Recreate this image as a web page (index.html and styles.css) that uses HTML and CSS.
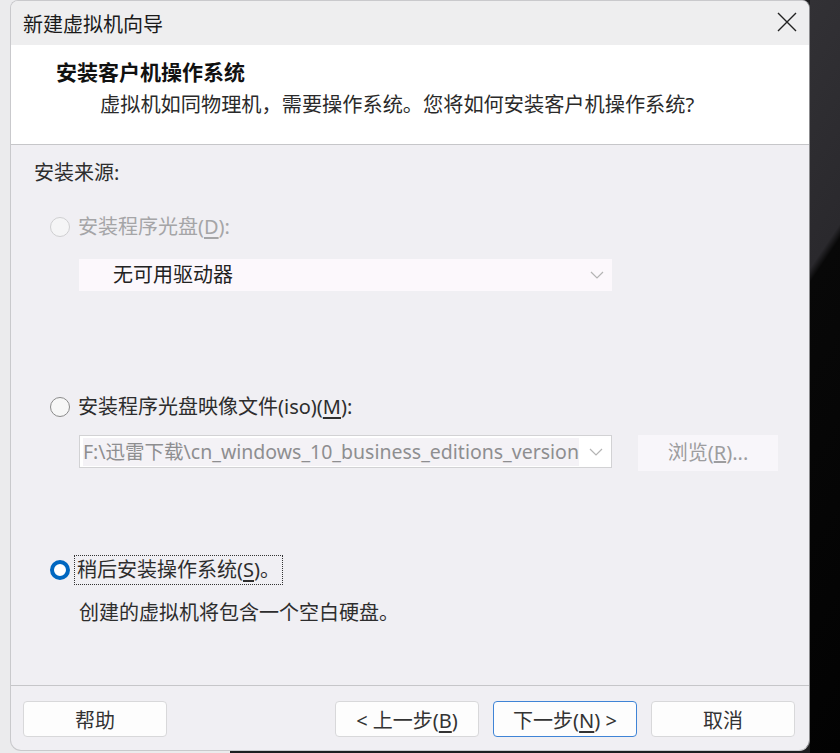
FILE: index.html
```html
<!DOCTYPE html>
<html lang="zh-CN">
<head>
    <meta charset="UTF-8">
    <meta name="viewport" content="width=device-width, initial-scale=1.0">
    <title>新建虚拟机向导</title>
    <link rel="stylesheet" href="styles.css">
</head>
<body>
    <div class="desk">
        <div class="window">
            <div class="titlebar">
                <span class="title">新建虚拟机向导</span>
                <svg class="close" width="22" height="22" viewBox="0 0 22 22">
                    <path d="M2 2 L20 20 M20 2 L2 20" stroke="#222" stroke-width="1.4" fill="none"/>
                </svg>
            </div>

            <div class="header">
                <h1>安装客户机操作系统</h1>
                <p>虚拟机如同物理机，需要操作系统。您将如何安装客户机操作系统?</p>
            </div>

            <div class="content">
                <div class="group-label">安装来源:</div>

                <div class="option disabled option-disc">
                    <span class="radio"></span>
                    <span class="label">安装程序光盘(<u>D</u>):</span>
                </div>
                <div class="select select-disc">
                    <span class="select-text">无可用驱动器</span>
                    <svg class="chevron" width="14" height="8" viewBox="0 0 14 8">
                        <path d="M1 1 L7 7 L13 1" stroke="#b4b4b4" stroke-width="1.2" fill="none"/>
                    </svg>
                </div>

                <div class="option option-iso">
                    <span class="radio"></span>
                    <span class="label">安装程序光盘映像文件(iso)(<u>M</u>):</span>
                </div>
                <div class="iso-row">
                    <div class="select select-iso">
                        <span class="select-text">F:\迅雷下载\cn_windows_10_business_editions_version</span>
                        <svg class="chevron" width="14" height="8" viewBox="0 0 14 8">
                            <path d="M1 1 L7 7 L13 1" stroke="#b4b4b4" stroke-width="1.2" fill="none"/>
                        </svg>
                    </div>
                    <div class="browse">浏览(<u>R</u>)...</div>
                </div>

                <div class="option checked option-later">
                    <span class="radio"></span>
                    <span class="label focus">稍后安装操作系统(<u>S</u>)。</span>
                </div>
                <div class="note">创建的虚拟机将包含一个空白硬盘。</div>
            </div>

            <div class="footer">
                <button class="btn">帮助</button>
                <button class="btn btn-back">&lt; 上一步(<u>B</u>)</button>
                <button class="btn btn-next">下一步(<u>N</u>) &gt;</button>
                <button class="btn">取消</button>
            </div>
        </div>
        <div class="desk-right"></div>
    </div>
</body>
</html>
```

FILE: styles.css
```css
body {
    margin: 0;
    height: 753px;
    overflow: hidden;
    font-family: "Noto Sans", "Noto Sans CJK SC", sans-serif;
    background: linear-gradient(to right, #ebebed 0, #ebebed 230px, #1d1d1f 230px);
}

.desk {
    display: flex;
    height: 753px;
}

.window {
    margin-left: 10px;
    width: 798px;
    height: 749px;
    display: flex;
    flex-direction: column;
    background-color: #f0eff3;
    border: 1px solid #c9c9cc;
    border-right-color: #8c8c8f;
    border-radius: 8px 8px 11px 11px;
    overflow: hidden;
}

.desk-right {
    flex: 1;
    background: linear-gradient(124deg, #323135 0, #2a292d 150px, #080808 158px, #020202 100%);
}

.titlebar {
    height: 44px;
    flex-shrink: 0;
    display: flex;
    align-items: center;
    justify-content: space-between;
    padding: 0 11px 0 12px;
    background-color: #eeeeef;
}

.title {
    font-size: 20px;
    color: #1a1a1a;
}

.close {
    margin-top: -2px;
}

.header {
    height: 100px;
    flex-shrink: 0;
    box-sizing: border-box;
    padding-top: 13px;
    background-color: #fff;
    border-bottom: 1px solid #c6c6c9;
}

.header h1 {
    margin: 0 0 0 45px;
    font-size: 21px;
    line-height: 28px;
    font-weight: bold;
    color: #111;
}

.header p {
    margin: 4px 0 0 89px;
    font-size: 20.2px;
    line-height: 28px;
    color: #2a2a2a;
}

.content {
    flex: 1;
    padding: 14px 0 0 23px;
    font-size: 20px;
    line-height: 28px;
    color: #2d2d2d;
}

.option {
    display: flex;
    align-items: center;
    margin-left: 16px;
}

.option-disc {
    margin-top: 26px;
}

.option-iso {
    margin-top: 102px;
}

.option-later {
    margin-top: 85px;
}

.radio {
    width: 18px;
    height: 18px;
    border-radius: 50%;
    border: 1px solid #8b8b8b;
    background-color: #f7f7f7;
    margin-right: 8px;
    flex-shrink: 0;
}

.disabled .radio {
    border-color: #cfcfd1;
    background-color: #f5f5f6;
}

.disabled .label {
    color: #a5a5a7;
}

.checked .radio {
    width: 12px;
    height: 12px;
    border: 4px solid #0067c0;
    background-color: #fff;
    margin-right: 7px;
}

.label u {
    text-underline-offset: 3px;
}

.focus {
    outline: 1px dotted #333;
    padding: 0 2px;
    margin-left: -2px;
}

.select {
    display: flex;
    align-items: center;
    justify-content: space-between;
    box-sizing: border-box;
    margin-left: 45px;
    width: 533px;
    height: 33px;
}

.select-disc {
    margin-top: 18px;
    height: 32px;
    padding: 0 8px 0 34px;
    background-color: #fcf8fc;
}

.select-disc .select-text {
    color: #222;
}

.iso-row {
    display: flex;
    align-items: flex-start;
    margin-top: 14px;
}

.select-iso {
    padding: 0 8px 0 3px;
    background-color: #fff;
    border: 1px solid #d2d2d4;
}

.select-iso .select-text {
    font-size: 19.5px;
    color: #8e8e90;
    white-space: nowrap;
    overflow: hidden;
    background-color: #f4f2f6;
}

.browse {
    margin-left: 26px;
    width: 140px;
    height: 36px;
    line-height: 36px;
    text-align: center;
    background-color: #f8f6fa;
    color: #9d9d9f;
}

.note {
    margin: 15px 0 0 45px;
}

.footer {
    height: 65px;
    flex-shrink: 0;
    box-sizing: border-box;
    display: flex;
    align-items: flex-start;
    gap: 14px;
    padding: 15px 14px 0 12px;
    border-top: 1px solid #c6c6c9;
}

button {
    font-family: inherit;
}

.btn {
    width: 144px;
    height: 36px;
    padding: 0;
    font-size: 20px;
    color: #333;
    background-color: #fdfdfd;
    border: 1px solid #d8d8da;
    border-radius: 4px;
}

.btn-back {
    margin-left: auto;
}

.btn-next {
    border-color: #3f84d6;
}

.btn u {
    text-underline-offset: 3px;
}
```
